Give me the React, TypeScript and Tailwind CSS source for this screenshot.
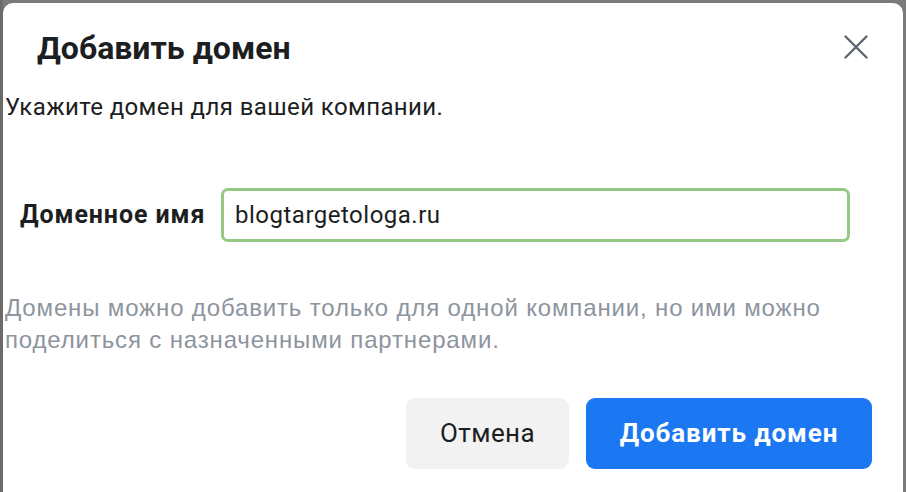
import React from "react";

export default function App() {
  return (
    <div className="w-[906px] h-[492px] bg-[#7b7b7b] overflow-hidden relative" style={{ fontFamily: "Roboto, 'Noto Sans', sans-serif" }}>
      <div className="absolute left-0 top-0 w-[3px] h-full bg-[#6a6a6a]" />
      <div className="ml-[3px] mt-[3px] w-[900px] h-[489px] bg-white rounded-t-[10px] flex flex-col">
        <div className="flex items-start justify-between pl-[34px] pr-[35px] pt-[25px]">
          <h1 className="text-[32px] leading-[40px] font-bold text-[#1c1e21] tracking-[0px]">Добавить домен</h1>
          <svg width="24" height="24" viewBox="0 0 24 24" className="mt-[7px]">
            <path d="M1.5 1.5 L22.5 22.5 M22.5 1.5 L1.5 22.5" stroke="#606770" strokeWidth="2.4" strokeLinecap="round" />
          </svg>
        </div>
        <p className="mt-[25px] pl-[2px] text-[24px] leading-[28px] text-[#1c1e21] tracking-[0.4px]">Укажите домен для вашей компании.</p>
        <div className="mt-[67px] flex items-center pl-[17px]">
          <span className="w-[201px] text-[25px] font-bold text-[#1c1e21] tracking-[0.9px]">Доменное имя</span>
          <div className="w-[629px] h-[54px] border-[3px] border-[#93c984] rounded-[7px] flex items-center pl-[11px] text-[24px] text-[#1c1e21] tracking-[0.5px]">
            blogtargetologa.ru
          </div>
        </div>
        <p className="mt-[50px] pl-[2px] w-[850px] text-[24px] leading-[32px] text-[#8d949e] tracking-[0.85px]" style={{ fontFamily: "'Liberation Sans', Arial, sans-serif" }}>
          Домены можно добавить только для одной компании, но ими можно поделиться с назначенными партнерами.
        </p>
        <div className="mt-[42px] flex justify-end gap-[17px] pr-[31px]">
          <button className="w-[163px] h-[71px] rounded-[9px] bg-[#f2f2f2] text-[26px] text-[#1c1e21] tracking-[0.4px]">Отмена</button>
          <button className="w-[286px] h-[71px] rounded-[9px] bg-[#1b77f2] text-[26px] font-bold text-white tracking-[0.9px]">Добавить домен</button>
        </div>
      </div>
    </div>
  );
}
